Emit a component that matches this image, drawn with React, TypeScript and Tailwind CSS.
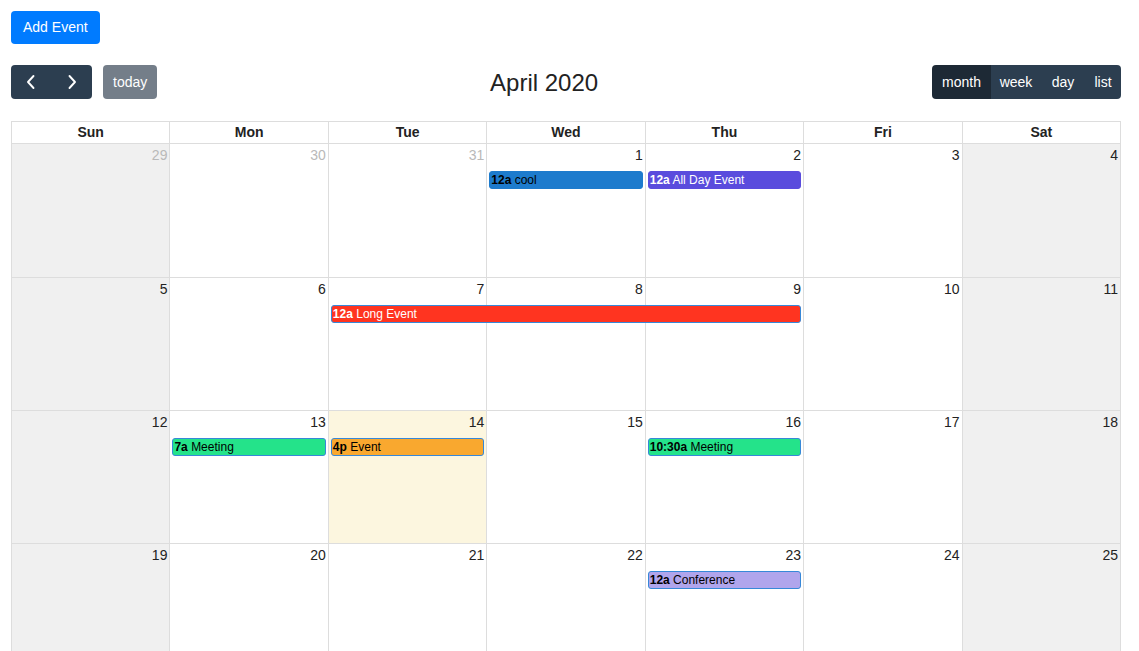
import React from "react";

type Ev = { col: number; span: number; time: string; title: string; bg: string; border: string; text: string };

const weeks: { days: { n: number; other?: boolean; today?: boolean }[]; events: Ev[]; h: string }[] = [
  {
    h: "h-[134px]",
    days: [{ n: 29, other: true }, { n: 30, other: true }, { n: 31, other: true }, { n: 1 }, { n: 2 }, { n: 3 }, { n: 4 }],
    events: [
      { col: 4, span: 1, time: "12a", title: "cool", bg: "bg-[#1d7bcd]", border: "border-[#1d7bcd]", text: "text-black" },
      { col: 5, span: 1, time: "12a", title: "All Day Event", bg: "bg-[#5a4cdd]", border: "border-[#5a4cdd]", text: "text-white" },
    ],
  },
  {
    h: "h-[133px]",
    days: [{ n: 5 }, { n: 6 }, { n: 7 }, { n: 8 }, { n: 9 }, { n: 10 }, { n: 11 }],
    events: [
      { col: 3, span: 3, time: "12a", title: "Long Event", bg: "bg-[#ff3420]", border: "border-[#3788d8]", text: "text-white" },
    ],
  },
  {
    h: "h-[133px]",
    days: [{ n: 12 }, { n: 13 }, { n: 14, today: true }, { n: 15 }, { n: 16 }, { n: 17 }, { n: 18 }],
    events: [
      { col: 2, span: 1, time: "7a", title: "Meeting", bg: "bg-[#24e38a]", border: "border-[#3788d8]", text: "text-black" },
      { col: 3, span: 1, time: "4p", title: "Event", bg: "bg-[#f9a82f]", border: "border-[#3788d8]", text: "text-black" },
      { col: 5, span: 1, time: "10:30a", title: "Meeting", bg: "bg-[#24e38a]", border: "border-[#3788d8]", text: "text-black" },
    ],
  },
  {
    h: "h-[133px]",
    days: [{ n: 19 }, { n: 20 }, { n: 21 }, { n: 22 }, { n: 23 }, { n: 24 }, { n: 25 }],
    events: [
      { col: 5, span: 1, time: "12a", title: "Conference", bg: "bg-[#b0a5ec]", border: "border-[#3788d8]", text: "text-black" },
    ],
  },
];

const colStart = ["", "col-start-1", "col-start-2", "col-start-3", "col-start-4", "col-start-5", "col-start-6", "col-start-7"];
const colSpan = ["", "col-span-1", "col-span-2", "col-span-3"];

function Chevron({ dir }: { dir: "l" | "r" }) {
  return (
    <svg width="10" height="16" viewBox="0 0 10 16" fill="none">
      <path
        d={dir === "l" ? "M7.5 2 L2 8 L7.5 14" : "M2.5 2 L8 8 L2.5 14"}
        stroke="white"
        strokeWidth="1.9"
        strokeLinecap="round"
        strokeLinejoin="round"
      />
    </svg>
  );
}

export default function App() {
  return (
    <div className="w-[1139px] h-[651px] overflow-hidden bg-white text-[14px] text-[#212529] font-['Liberation_Sans',Arial,sans-serif] px-[11px] pt-[11px]">
      <button className="bg-[#007bff] text-white rounded-[4px] px-[12px] py-[6px] leading-[21px] text-[14px]">Add Event</button>

      <div className="flex items-center justify-between mt-[21px] mb-[22px] h-[34px] mr-[7px]">
        <div className="flex items-center">
          <div className="flex rounded-[4px] overflow-hidden bg-[#2c3e50] h-[34px]">
            <button className="w-[40px] flex items-center justify-center"><Chevron dir="l" /></button>
            <button className="w-[41px] flex items-center justify-center"><Chevron dir="r" /></button>
          </div>
          <button className="ml-[11px] h-[34px] px-[10px] rounded-[4px] bg-[#747e89] text-white leading-[21px]">today</button>
        </div>
        <h2 className="text-[24px] leading-[34px] text-[#222] ml-[-1px] pt-[1px]">April 2020</h2>
        <div className="flex rounded-[4px] overflow-hidden h-[34px] text-white">
          <button className="bg-[#1d2935] w-[59px]">month</button>
          <button className="bg-[#2c3e50] w-[50px]">week</button>
          <button className="bg-[#2c3e50] w-[44px]">day</button>
          <button className="bg-[#2c3e50] w-[36px]">list</button>
        </div>
      </div>

      <div className="w-[1110px] border-t border-l border-[#dddddd]">
        <div className="grid grid-cols-7">
          {["Sun", "Mon", "Tue", "Wed", "Thu", "Fri", "Sat"].map((d) => (
            <div key={d} className="h-[22px] border-r border-b border-[#dddddd] text-center font-bold leading-[21px] text-[#222]">
              {d}
            </div>
          ))}
        </div>
        {weeks.map((w, wi) => (
          <div key={wi} className={`grid grid-cols-7 ${w.h}`}>
            {w.days.map((d, di) => {
              const weekend = di === 0 || di === 6;
              const bg = d.today ? "bg-[#fcf6df]" : weekend ? "bg-[#f0f0f0]" : "bg-white";
              return (
                <div
                  key={di}
                  className={`${colStart[di + 1]} row-start-1 border-r border-b border-[#dddddd] ${bg} text-right pr-[2px] pt-[3px] leading-[17px] ${d.other ? "text-[#b9b9b9]" : "text-[#222]"}`}
                >
                  {d.n}
                </div>
              );
            })}
            {w.events.map((e, ei) => (
              <div
                key={ei}
                className={`${colStart[e.col]} ${colSpan[e.span]} row-start-1 self-start mt-[27px] ml-[2px] mr-[3px] h-[18px] rounded-[3px] border ${e.border} ${e.bg} ${e.text} text-[12px] leading-[16px] pl-[1px] whitespace-nowrap overflow-hidden`}
              >
                <span className="font-bold">{e.time}</span> {e.title}
              </div>
            ))}
          </div>
        ))}
      </div>
    </div>
  );
}
